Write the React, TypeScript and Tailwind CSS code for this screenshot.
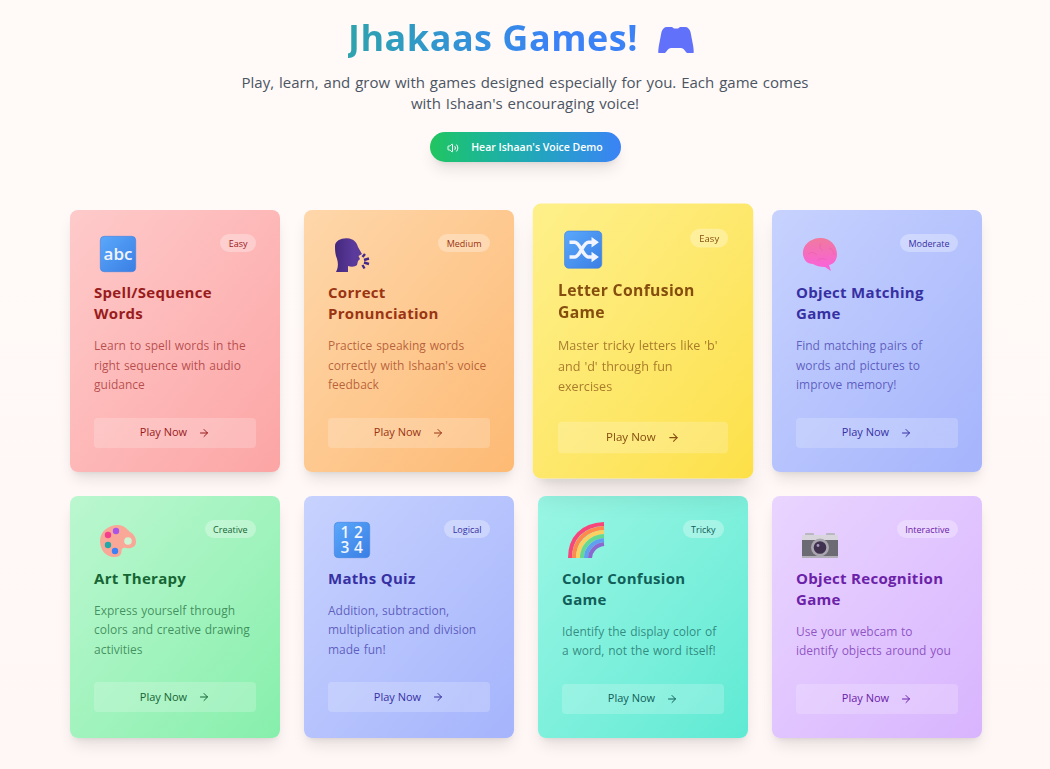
import { ArrowRight, Volume2 } from "lucide-react";
import type { ReactNode } from "react";

const AbcIcon = () => (
  <svg viewBox="0 0 48 49" className="w-12 h-[49px]">
    <defs>
      <linearGradient id="blueTile" x1="0" y1="0" x2="1" y2="1">
        <stop offset="0" stopColor="#5aa8fb" />
        <stop offset="1" stopColor="#3a7fe4" />
      </linearGradient>
    </defs>
    <rect x="6.300" y="2.300" width="35.400" height="35.400" rx="4" fill="url(#blueTile)" stroke="#3f80e0" strokeWidth="0.6" />
    <text x="24" y="25.500" textAnchor="middle" fontSize="17" fontWeight="600" fontFamily="Open Sans" fill="#f2f4ff">abc</text>
  </svg>
);

const HeadIcon = () => (
  <svg viewBox="0 0 48 49" className="w-12 h-[49px]">
    <defs>
      <linearGradient id="headFill" x1="0" y1="0" x2="1" y2="0">
        <stop offset="0" stopColor="#44287c" />
        <stop offset="0.7" stopColor="#5b3a9c" />
      </linearGradient>
    </defs>
    <path d="M7 12C7 7 13 4 19 4.300C26 4.500 29 9 30 13L34 20L30.500 22L32 25L30 27L29 31C27 33 23 33 20 32L20 38L8 38C11 32 10 27 8 22C7 18 7 15 7 12Z" fill="url(#headFill)" />
    <path d="M34.500 23L37 20M36 26L41 24.500M36 28.500L41 30M34.500 31L36.500 34.500" stroke="#45298a" strokeWidth="2.400" />
  </svg>
);

const ShuffleIcon = () => (
  <svg viewBox="0 0 48 49" className="w-12 h-[49px]">
    <rect x="6.300" y="2.300" width="35.400" height="35.400" rx="4" fill="url(#blueTile)" stroke="#3f80e0" strokeWidth="0.6" />
    <path d="M11 13h5c5 0 8 14 13 14h4M11 27h5c5 0 8-14 13-14h4" fill="none" stroke="#f2f4ff" strokeWidth="3.400" />
    <path d="M32 8l7 5-7 5zM32 22l7 5-7 5z" fill="#f2f4ff" />
  </svg>
);

const BrainIcon = () => (
  <svg viewBox="0 0 48 49" className="w-12 h-[49px]">
    <defs>
      <linearGradient id="brainFill" x1="0" y1="0" x2="0" y2="1">
        <stop offset="0" stopColor="#f07a9e" />
        <stop offset="1" stopColor="#fb5fe0" />
      </linearGradient>
    </defs>
    <path d="M7 21C6 12 13 5 23 4C33 3 41 11 41 20C41 26 38 30 33 31L35 37L29 33C24 33 20 32 17 30C11 30 8 26 7 21Z" fill="url(#brainFill)" />
    <path d="M12 20c4-3 7-1 9 1M25 9c-2 3-1 6 2 8M21 27c3-3 7-3 10-1M33 14c3 1 5 3 5 7" fill="none" stroke="#e2509c" strokeWidth="0.7" strokeOpacity="0.45" />
  </svg>
);

const PaletteIcon = () => (
  <svg viewBox="0 0 48 49" className="w-12 h-[49px]">
    <path d="M6 21C6 11 15 5 24 5C30 5 33 9 36 12C40 14 42 18 42 22C42 27 37 29 32 28C29 27 27 29 27.500 32C27 36 24 37 20 37C12 37 6 30 6 21Z" fill="#f9a898" />
    <circle cx="34" cy="21" r="3.800" fill="#cdf5d4" />
    <circle cx="22" cy="11" r="3.200" fill="#a855e8" />
    <circle cx="14" cy="15" r="3.200" fill="#f43f8e" />
    <circle cx="14" cy="25" r="3.200" fill="#22a8a8" />
    <circle cx="21" cy="31" r="3.200" fill="#3b82f6" />
  </svg>
);

const NumbersIcon = () => (
  <svg viewBox="0 0 48 49" className="w-12 h-[49px]">
    <rect x="6.300" y="2.300" width="35.400" height="35.400" rx="4" fill="url(#blueTile)" stroke="#3f80e0" strokeWidth="0.6" />
    <g fontFamily="Open Sans" fontSize="15.500" fontWeight="600" fill="#f2f4ff" textAnchor="middle">
      <text x="17" y="17.500">1</text>
      <text x="30.500" y="17.500">2</text>
      <text x="17" y="33">3</text>
      <text x="30.500" y="33">4</text>
    </g>
  </svg>
);

const RainbowIcon = () => (
  <svg viewBox="0 0 48 49" className="w-12 h-[49px]" fill="none" strokeWidth="4">
    <path d="M8 38C8 18 20 5 42 4" stroke="#f8457a" />
    <path d="M12 38C12 21 23 9 42 8" stroke="#ff8a4c" />
    <path d="M16 38C16 24 26 13 42 12" stroke="#fcd060" />
    <path d="M20 38C20 27 28 17 42 16" stroke="#67d890" />
    <path d="M24 38C24 29 31 21 42 20" stroke="#60a0f0" />
    <path d="M28 38C28 32 33 25 42 24" stroke="#8a68d0" />
  </svg>
);

const CameraIcon = () => (
  <svg viewBox="0 0 48 49" className="w-12 h-[49px]">
    <rect x="9" y="13" width="9" height="3" rx="1" fill="#b9b7bf" />
    <rect x="30" y="13" width="9" height="3" rx="1" fill="#b9b7bf" />
    <rect x="6" y="15" width="36" height="6" rx="1" fill="#d8d6dc" />
    <rect x="6" y="20" width="36" height="16" fill="#6c6a72" />
    <rect x="6" y="36" width="36" height="2" fill="#b2aeb8" />
    <circle cx="24" cy="27.500" r="9" fill="#aaa6b0" />
    <circle cx="24" cy="27.500" r="6.300" fill="#40324f" />
    <circle cx="22" cy="25.500" r="1.400" fill="#a898c0" />
  </svg>
);

type Game = {
  title: string;
  desc: string;
  tag: string;
  icon: ReactNode;
  card: string;
  head: string;
  body: string;
  hot?: boolean;
};

const games: Game[] = [
  { title: "Spell/Sequence Words", desc: "Learn to spell words in the right sequence with audio guidance", tag: "Easy", icon: <AbcIcon />, card: "from-[#fecaca] to-[#fca5a5]", head: "text-[#991b1b]", body: "text-[#991b1b]/70" },
  { title: "Correct Pronunciation", desc: "Practice speaking words correctly with Ishaan's voice feedback", tag: "Medium", icon: <HeadIcon />, card: "from-[#fed7aa] to-[#fdba74]", head: "text-[#9a3412]", body: "text-[#9a3412]/70" },
  { title: "Letter Confusion Game", desc: "Master tricky letters like 'b' and 'd' through fun exercises", tag: "Easy", icon: <ShuffleIcon />, card: "from-[#fef08a] to-[#fde047]", head: "text-[#854d0e]", body: "text-[#854d0e]/70", hot: true },
  { title: "Object Matching Game", desc: "Find matching pairs of words and pictures to improve memory!", tag: "Moderate", icon: <BrainIcon />, card: "from-[#c7d2fe] to-[#a5b4fc]", head: "text-[#3730a3]", body: "text-[#3730a3]/70" },
  { title: "Art Therapy", desc: "Express yourself through colors and creative drawing activities", tag: "Creative", icon: <PaletteIcon />, card: "from-[#bbf7d0] to-[#86efac]", head: "text-[#166534]", body: "text-[#166534]/70" },
  { title: "Maths Quiz", desc: "Addition, subtraction, multiplication and division made fun!", tag: "Logical", icon: <NumbersIcon />, card: "from-[#c7d2fe] to-[#a5b4fc]", head: "text-[#3730a3]", body: "text-[#3730a3]/70" },
  { title: "Color Confusion Game", desc: "Identify the display color of a word, not the word itself!", tag: "Tricky", icon: <RainbowIcon />, card: "from-[#99f6e4] to-[#5eead4]", head: "text-[#115e59]", body: "text-[#115e59]/70" },
  { title: "Object Recognition Game", desc: "Use your webcam to identify objects around you", tag: "Interactive", icon: <CameraIcon />, card: "from-[#e9d5ff] to-[#d8b4fe]", head: "text-[#6b21a8]", body: "text-[#6b21a8]/70" },
];

const GameCard = ({ game }: { game: Game }) => (
  <div className={`rounded-lg bg-gradient-to-br p-6 ${game.card} ${game.hot ? "scale-105 shadow-xl" : "shadow-lg"}`}>
    <div className="flex justify-between items-start">
      {game.icon}
      <span className={`rounded-full bg-white/30 px-[8.5px] h-[18px] leading-[19px] text-[9px] font-medium ${game.head}`}>
        {game.tag}
      </span>
    </div>
    <h3 className={`-mt-px text-[15px] leading-[21px] font-bold tracking-[0.3px] mb-3 ${game.head}`}>{game.title}</h3>
    <p className={`text-[12px] leading-[19.5px] [word-spacing:0.7px] mb-[23px] ${game.body}`}>{game.desc}</p>
    <button className={`w-full h-[30px] rounded bg-white/20 flex items-center justify-center gap-[11px] text-[11px] font-medium ${game.head}`}>
      Play Now
      <ArrowRight size={12} />
    </button>
  </div>
);

const App = () => {
  return (
    <div className="min-h-[769px] bg-gradient-to-b from-[#fffaf8] to-[#fff7f6] font-['Open_Sans',sans-serif]">
      <div className="flex flex-col items-center pt-[12px]">
        <h1 className="flex items-center gap-5 pr-2 text-[36px] leading-[52px] font-bold tracking-[0.5px]">
          <span className="bg-gradient-to-r from-[#2fa3ad] to-[#3b82f6] to-70% bg-clip-text text-transparent">Jhakaas Games!</span>
          <svg viewBox="0 0 36 28" className="w-9 h-7 mt-1">
            <path d="M9 1h5l2 1.500h4L22 1h5c3 0 4.500 2 5.500 5L35 19c.7 4 1 8 .5 8H29c-2-2-3.500-5-6-5H13c-2.500 0-4 3-6 5H.5c-.5 0-.2-4 .5-8L3.500 6C4.500 3 6 1 9 1z" fill="#6271f9" />
          </svg>
        </h1>
        <p className="mt-2 w-[600px] text-center text-[15px] leading-[21px] [word-spacing:1px] text-[#4b5563]">
          Play, learn, and grow with games designed especially for you. Each game comes with Ishaan's encouraging voice!
        </p>
        <button className="mt-[18px] h-[30px] w-[191px] pt-px rounded-full bg-gradient-to-r from-[#22c55e] to-[#3b82f6] text-white text-[10.5px] font-semibold shadow-lg flex items-center justify-center gap-3">
          <Volume2 size={12} />
          Hear Ishaan's Voice Demo
        </button>
      </div>
      <div className="grid grid-cols-4 gap-6 pl-[70px] pr-[68px] mt-[48px] pb-6">
        {games.map((game) => (
          <GameCard key={game.title} game={game} />
        ))}
      </div>
    </div>
  );
};

export default App;
